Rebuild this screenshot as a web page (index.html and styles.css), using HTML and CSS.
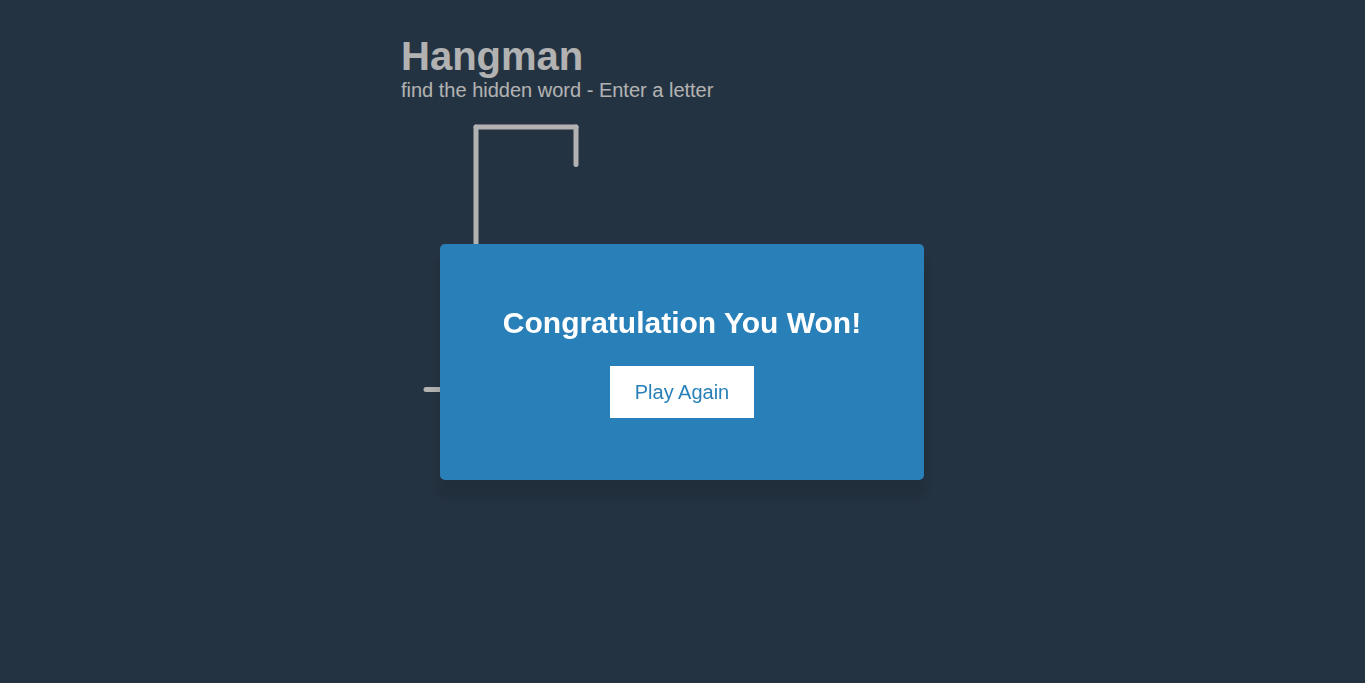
FILE: index.html
```html
<!DOCTYPE html>
<html lang="en">
<head>
<meta charset="UTF-8">
<title>Hangman</title>
<link rel="stylesheet" href="styles.css">
</head>
<body>
  <main class="page">
    <h1 class="title">Hangman</h1>
    <p class="subtitle">find the hidden word - Enter a letter</p>
    <div class="game-container">
      <svg class="figure-container" viewBox="0 0 200 250" width="250" height="312.5">
        <line x1="60" y1="20" x2="140" y2="20" />
        <line x1="140" y1="20" x2="140" y2="50" />
        <line x1="60" y1="20" x2="60" y2="230" />
        <line x1="20" y1="230" x2="100" y2="230" />
      </svg>
    </div>
  </main>
  <div class="popup-container">
    <div class="popup">
      <h2 class="popup-title">Congratulation You Won!</h2>
      <button class="play-button">Play Again</button>
    </div>
  </div>
</body>
</html>
```
FILE: styles.css
```css
* { box-sizing: border-box; }

html, body {
  margin: 0;
  height: 100%;
}

body {
  background-color: #34495e;
  color: #ffffff;
  font-family: "Liberation Sans", Arial, Helvetica, sans-serif;
  overflow: hidden;
}

.page {
  width: 563px;
  margin: 0 auto;
  display: flex;
  flex-direction: column;
}

.title {
  margin: 34px 0 0;
  font-size: 40px;
  line-height: 44px;
  font-weight: bold;
}

.subtitle {
  margin: 1px 0 0;
  font-size: 20px;
  line-height: 23px;
}

.game-container {
  margin-top: 0;
}

.figure-container {
  display: block;
  fill: transparent;
  stroke: #ffffff;
  stroke-width: 4px;
  stroke-linecap: round;
}

.popup-container {
  position: fixed;
  top: 0;
  left: 0;
  right: 0;
  bottom: 0;
  background-color: rgba(0, 0, 0, 0.3);
  display: flex;
  align-items: center;
  justify-content: center;
  padding-top: 41px;
  padding-right: 1px;
}

.popup {
  width: 484px;
  background: #2980b9;
  border-radius: 5px;
  box-shadow: 0 15px 10px 3px rgba(0, 0, 0, 0.1);
  padding: 62px 20px 62px;
  text-align: center;
  display: flex;
  flex-direction: column;
  align-items: center;
}

.popup-title {
  margin: 0 0 26px;
  font-size: 30px;
  line-height: 34px;
  font-weight: bold;
  color: #ffffff;
}

.play-button {
  background-color: #ffffff;
  color: #2980b9;
  border: 0;
  font-family: "Liberation Sans", Arial, Helvetica, sans-serif;
  font-size: 20px;
  line-height: 24px;
  padding: 14px 25px;
  cursor: pointer;
}
```
